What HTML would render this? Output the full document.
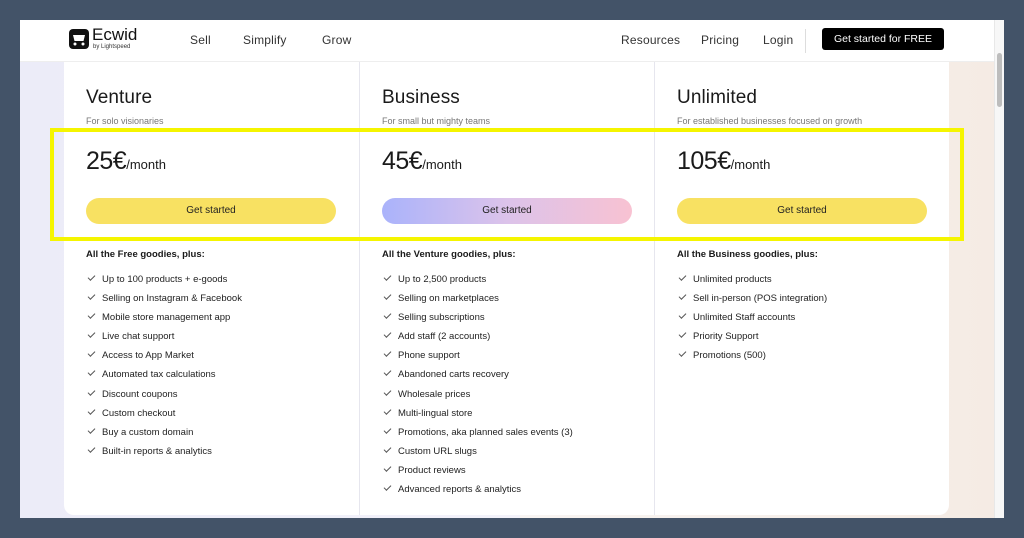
<!DOCTYPE html>
<html><head><meta charset="utf-8"><style>
*{margin:0;padding:0;box-sizing:border-box}
body{width:1024px;height:538px;background:#435368;position:relative;overflow:hidden;font-family:"Liberation Sans",sans-serif;color:#1a1a1a}
.screen{position:absolute;left:20px;top:20px;width:984px;height:498px;background:#fff;overflow:hidden}
.bgl{position:absolute;left:0;top:42px;width:500px;height:456px;background:linear-gradient(90deg,#ececf8,#f3f2fa)}
.bgr{position:absolute;left:500px;top:42px;width:474px;height:456px;background:linear-gradient(90deg,#f8f4f2,#f5ebe4)}
.sb{position:absolute;left:974px;top:0;width:10px;height:498px;background:#f7f7f7;border-left:1px solid #e8e8e8}
.thumb{position:absolute;left:977px;top:33px;width:5px;height:54px;background:#bdbdbd;border-radius:3px}
.hdr{position:absolute;left:0;top:0;width:974px;height:42px;background:#fff;border-bottom:1px solid #eee}
.nav{position:absolute;top:13px;font-size:12px;color:#333;letter-spacing:.2px}
.cta{position:absolute;left:802px;top:8px;width:122px;height:22px;background:#000;color:#fff;border-radius:3px;font-size:10.5px;text-align:center;line-height:23px}
.card{position:absolute;left:44px;top:42px;width:885px;height:453px;background:#fff;border-radius:0 0 10px 10px}
.col{position:absolute;top:0;height:453px;width:295px;padding-left:22px}
.col+.col{border-left:1px solid #e6e6ee}
h2{font-weight:normal;font-size:19px;margin-top:25px;letter-spacing:.1px}
.sub{font-size:9px;color:#777;margin-top:7px}
.price{font-size:25px;margin-top:21px;letter-spacing:-.5px;height:32px}
.price span{font-size:13px;letter-spacing:0}
.btn{width:250px;height:26px;border-radius:13px;background:#f8e162;font-size:10px;text-align:center;line-height:26px;margin-top:19px;color:#222}
.grad{background:linear-gradient(90deg,#aab3fb,#dcc3ea,#f8c2d2)}
.plus{font-size:9.5px;font-weight:bold;margin-top:25px}
ul{list-style:none;margin-top:14px}
li{font-size:9.5px;height:19.1px;position:relative;padding-left:16px;color:#222}
li:before{content:"";position:absolute;left:2px;top:1px;width:6px;height:3px;border-left:1px solid #555;border-bottom:1px solid #555;transform:rotate(-45deg)}
.yb{position:absolute;left:50px;top:128px;width:914px;height:113px;border:4px solid #f5f500}
</style></head><body>
<div class="screen">
<div class="bgl"></div><div class="bgr"></div>
<div class="hdr">
<svg style="position:absolute;left:49px;top:9px" width="20" height="20" viewBox="0 0 20 20"><rect x="0" y="0" width="20" height="20" rx="4" fill="#111"/><path d="M4 6h12l-1.5 6h-9z" fill="#fff"/><circle cx="6" cy="15" r="1.5" fill="#fff"/><circle cx="14" cy="15" r="1.5" fill="#fff"/></svg>
<div style="position:absolute;left:72px;top:5px;font-size:17px;color:#111">Ecwid</div>
<div style="position:absolute;left:73px;top:24px;font-size:6px;color:#333">by Lightspeed</div>
<div class="nav" style="left:170px">Sell</div>
<div class="nav" style="left:223px">Simplify</div>
<div class="nav" style="left:302px">Grow</div>
<div class="nav" style="left:601px">Resources</div>
<div class="nav" style="left:681px">Pricing</div>
<div class="nav" style="left:743px">Login</div>
<div style="position:absolute;left:785px;top:9px;width:1px;height:24px;background:#ddd"></div>
<div class="cta">Get started for FREE</div>
</div>
<div class="card">
<div class="col" style="left:0">
<h2>Venture</h2><div class="sub">For solo visionaries</div>
<div class="price">25€<span>/month</span></div>
<div class="btn">Get started</div>
<div class="plus">All the Free goodies, plus:</div>
<ul><li>Up to 100 products + e-goods</li><li>Selling on Instagram &amp; Facebook</li><li>Mobile store management app</li><li>Live chat support</li><li>Access to App Market</li><li>Automated tax calculations</li><li>Discount coupons</li><li>Custom checkout</li><li>Buy a custom domain</li><li>Built-in reports &amp; analytics</li></ul>
</div>
<div class="col" style="left:295px">
<h2>Business</h2><div class="sub">For small but mighty teams</div>
<div class="price">45€<span>/month</span></div>
<div class="btn grad">Get started</div>
<div class="plus">All the Venture goodies, plus:</div>
<ul><li>Up to 2,500 products</li><li>Selling on marketplaces</li><li>Selling subscriptions</li><li>Add staff (2 accounts)</li><li>Phone support</li><li>Abandoned carts recovery</li><li>Wholesale prices</li><li>Multi-lingual store</li><li>Promotions, aka planned sales events (3)</li><li>Custom URL slugs</li><li>Product reviews</li><li>Advanced reports &amp; analytics</li></ul>
</div>
<div class="col" style="left:590px">
<h2>Unlimited</h2><div class="sub">For established businesses focused on growth</div>
<div class="price">105€<span>/month</span></div>
<div class="btn">Get started</div>
<div class="plus">All the Business goodies, plus:</div>
<ul><li>Unlimited products</li><li>Sell in-person (POS integration)</li><li>Unlimited Staff accounts</li><li>Priority Support</li><li>Promotions (500)</li></ul>
</div>
</div>
<div class="sb"></div><div class="thumb"></div>
</div>
<div class="yb"></div>
</body></html>
